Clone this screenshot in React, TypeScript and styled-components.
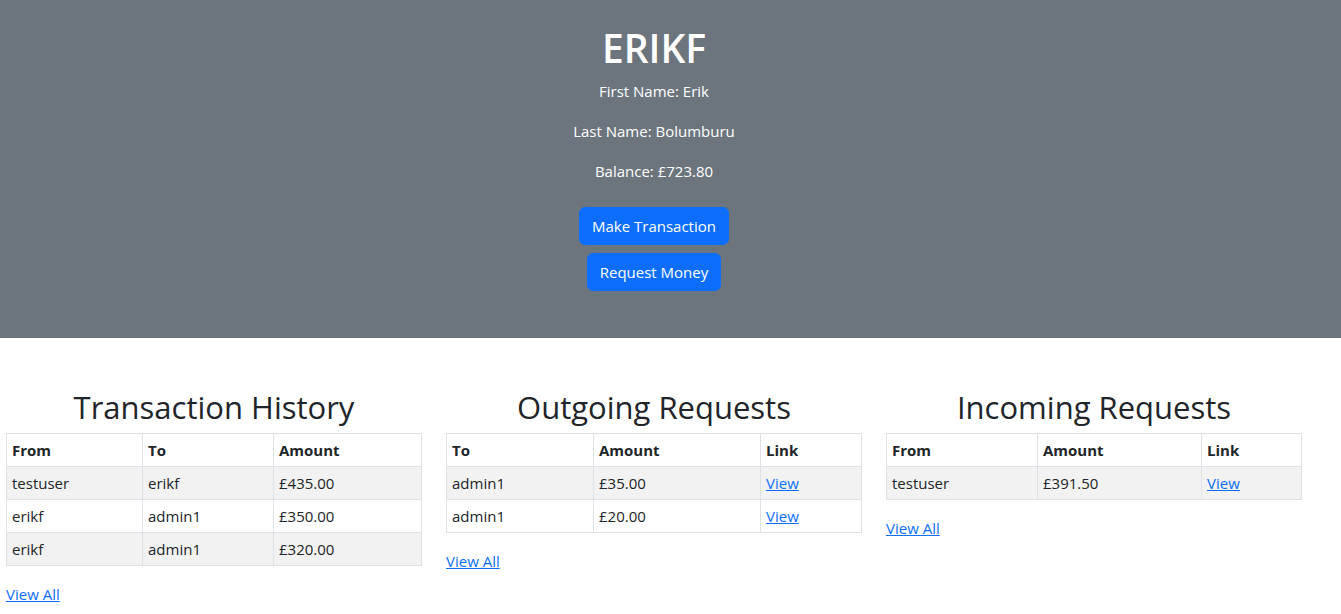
import styled, { createGlobalStyle } from "styled-components";

const GlobalStyle = createGlobalStyle`
	body {
		margin: 0;
		font-family: "Open Sans", "Noto Sans", sans-serif;
		font-size: 16px;
		line-height: 1.5;
		color: #212529;
		background: #fff;
	}
	* {
		box-sizing: border-box;
	}
`;

const Banner = styled.header`
	background-color: #6c757d;
	color: #fff;
	padding: 24px 0 47px;
`;

const BannerInner = styled.div`
	width: 1308px;
	text-align: center;
	display: flex;
	flex-direction: column;
	align-items: center;
`;

const Username = styled.h1`
	margin: 0 0 7px;
	font-size: 39px;
	font-weight: 600;
	line-height: 48px;
`;

const Detail = styled.p`
	margin: 0 0 16px;
	font-size: 15px;
	line-height: 24px;
`;

const Actions = styled.div`
	margin-top: 8px;
	display: flex;
	flex-direction: column;
	align-items: center;
	gap: 8px;
`;

const Button = styled.button`
	font-family: inherit;
	font-size: 15px;
	line-height: 24px;
	color: #fff;
	background-color: #0d6efd;
	border: 1px solid #0d6efd;
	border-radius: 6px;
	padding: 6px 12px;
	cursor: pointer;
`;

const Columns = styled.main`
	width: 1308px;
	display: grid;
	grid-template-columns: repeat(3, 416px);
	column-gap: 24px;
	padding: 51px 6px 0;
	align-items: start;
`;

const Section = styled.section`
	display: flex;
	flex-direction: column;
`;

const Heading = styled.h2`
	margin: 0 0 7px;
	font-size: 31px;
	font-weight: 500;
	line-height: 1.2;
	text-align: center;
`;

const Table = styled.table`
	width: 415px;
	table-layout: fixed;
	border-collapse: collapse;
	margin-bottom: 16px;
	font-size: 15px;

	th,
	td {
		border: 1px solid #dee2e6;
		padding: 4px 5px;
		line-height: 24px;
		text-align: left;
		white-space: nowrap;
	}

	th {
		font-weight: 700;
	}

	tbody tr:nth-child(odd) td {
		background-color: #f2f2f2;
	}
`;

const Col = styled.col<{ $w: number }>`
	width: ${(p) => p.$w}px;
`;

const Link = styled.a`
	color: #0d6efd;
	text-decoration: underline;
	font-size: 15px;
	line-height: 24px;
`;

type Block = {
	title: string;
	cols: number[];
	head: string[];
	rows: string[][];
	linkCol?: number;
};

const blocks: Block[] = [
	{
		title: "Transaction History",
		cols: [136, 131, 148],
		head: ["From", "To", "Amount"],
		rows: [
			["testuser", "erikf", "£435.00"],
			["erikf", "admin1", "£350.00"],
			["erikf", "admin1", "£320.00"],
		],
	},
	{
		title: "Outgoing Requests",
		cols: [147, 167, 101],
		head: ["To", "Amount", "Link"],
		rows: [
			["admin1", "£35.00", "View"],
			["admin1", "£20.00", "View"],
		],
		linkCol: 2,
	},
	{
		title: "Incoming Requests",
		cols: [151, 164, 100],
		head: ["From", "Amount", "Link"],
		rows: [["testuser", "£391.50", "View"]],
		linkCol: 2,
	},
];

function App() {
	return (
		<>
			<GlobalStyle />
			<Banner>
				<BannerInner>
					<Username>ERIKF</Username>
					<Detail>First Name: Erik</Detail>
					<Detail>Last Name: Bolumburu</Detail>
					<Detail>Balance: £723.80</Detail>
					<Actions>
						<Button>Make Transaction</Button>
						<Button>Request Money</Button>
					</Actions>
				</BannerInner>
			</Banner>
			<Columns>
				{blocks.map((b) => (
					<Section key={b.title}>
						<Heading>{b.title}</Heading>
						<Table>
							<colgroup>
								{b.cols.map((w, i) => (
									<Col key={i} $w={w} />
								))}
							</colgroup>
							<thead>
								<tr>
									{b.head.map((h) => (
										<th key={h}>{h}</th>
									))}
								</tr>
							</thead>
							<tbody>
								{b.rows.map((r, ri) => (
									<tr key={ri}>
										{r.map((c, ci) => (
											<td key={ci}>
												{ci === b.linkCol ? <Link href="#">{c}</Link> : c}
											</td>
										))}
									</tr>
								))}
							</tbody>
						</Table>
						<div>
							<Link href="#">View All</Link>
						</div>
					</Section>
				))}
			</Columns>
		</>
	);
}

export default App;
